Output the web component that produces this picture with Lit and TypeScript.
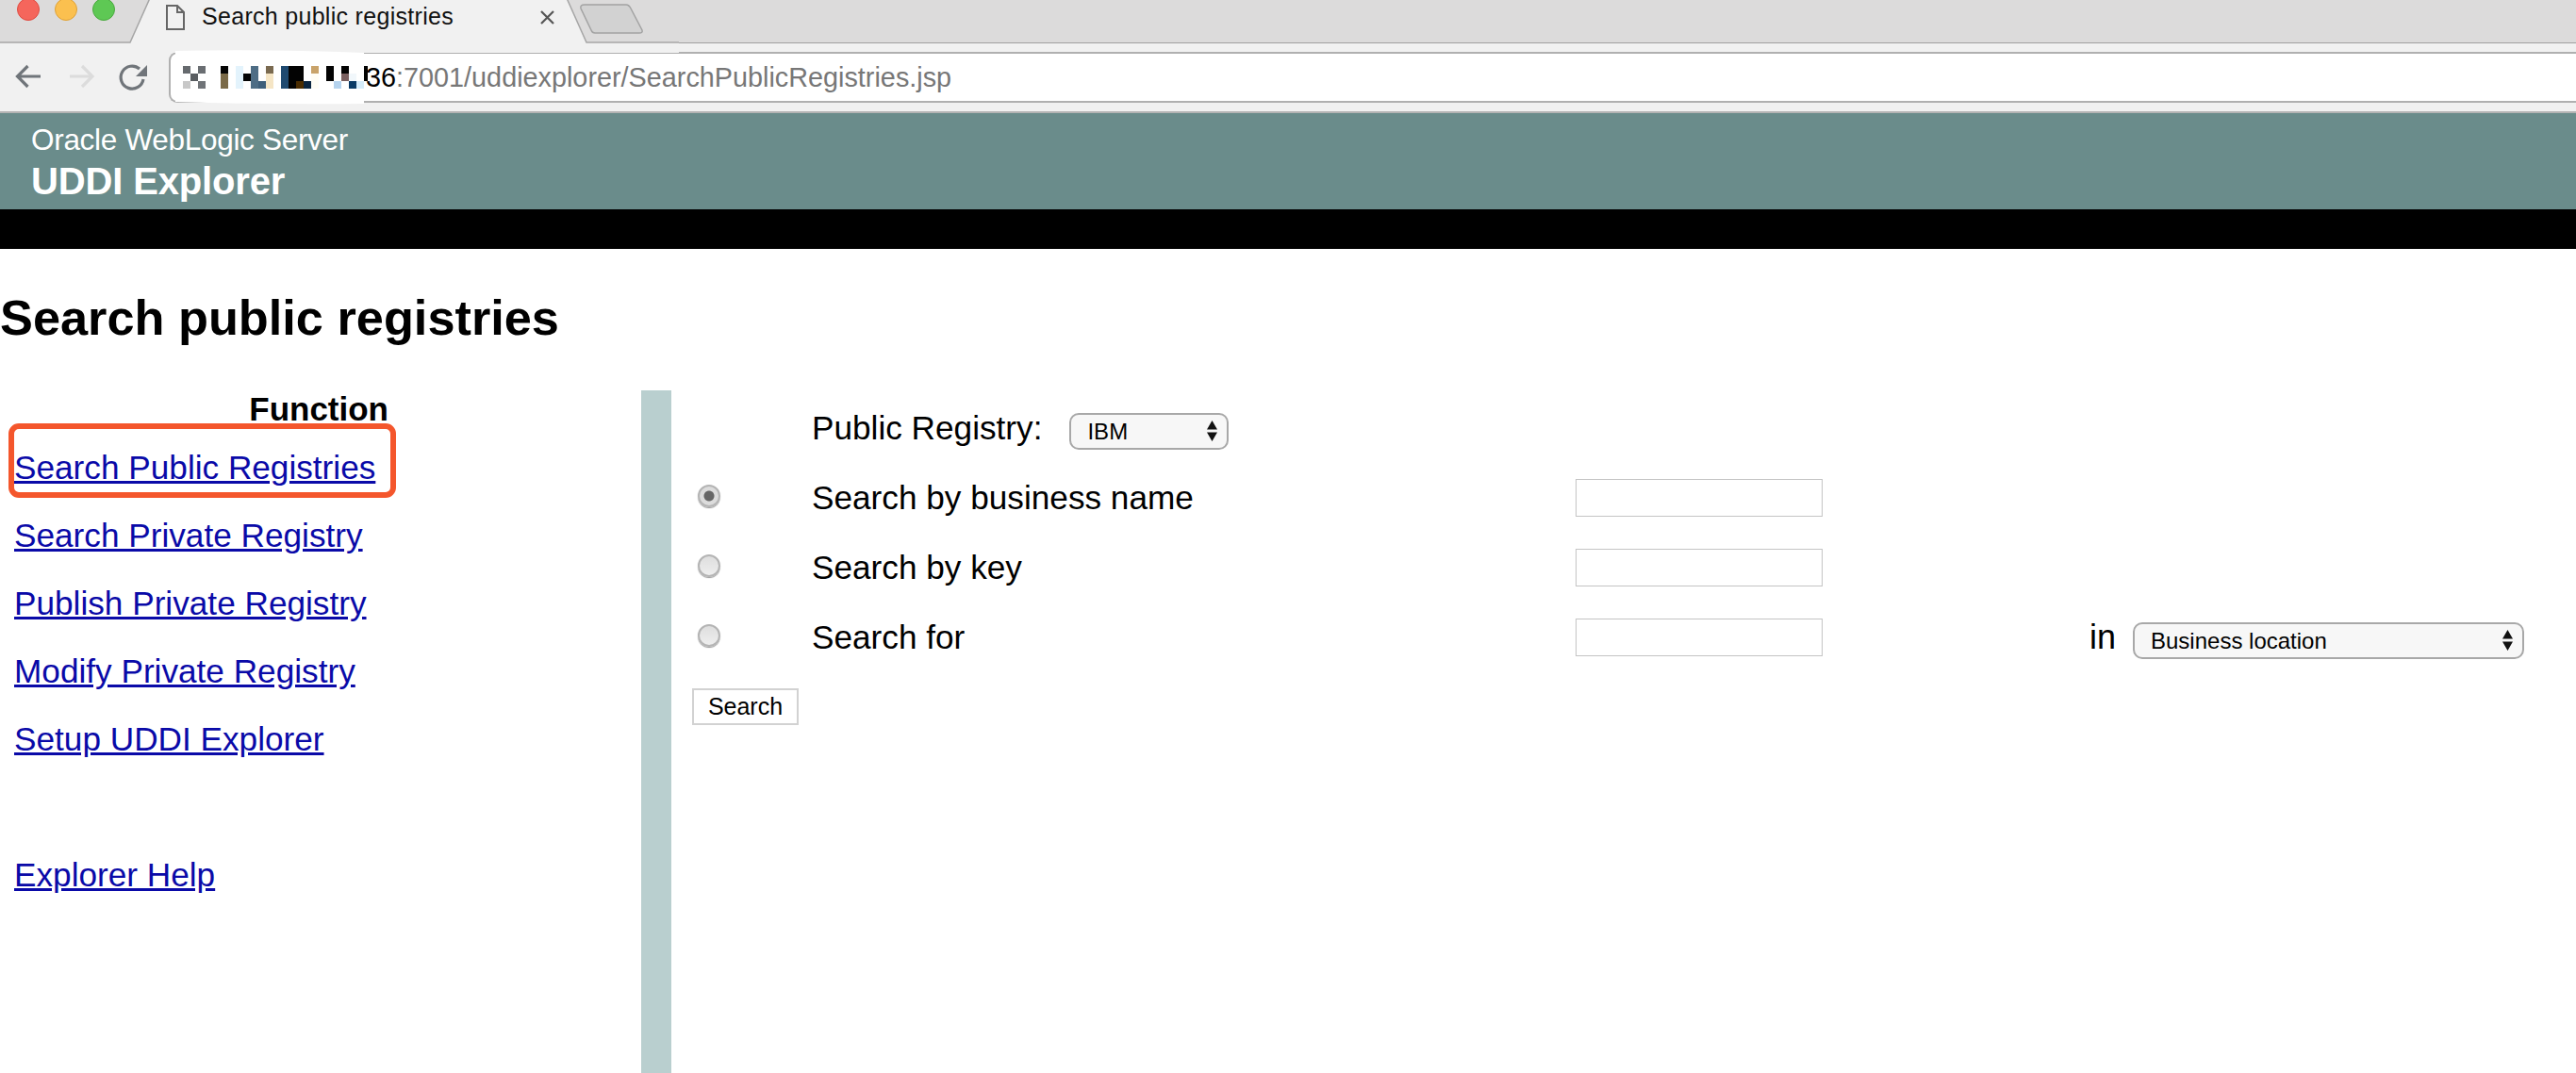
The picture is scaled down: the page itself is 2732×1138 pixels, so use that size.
import { LitElement, html, css, svg } from "lit";
import { customElement } from "lit/decorators.js";

const PIXELS: [number, number, number, number, string][] = [
  [194, 70, 8, 8, "#666a6e"], [210, 70, 8, 8, "#6a6e72"], [202, 78, 8, 8, "#5a5e62"],
  [194, 86, 8, 8, "#c8c8c8"], [210, 86, 8, 8, "#707478"],
  [234, 70, 8, 8, "#050505"], [234, 78, 8, 16, "#7a6a48"],
  [250, 70, 8, 24, "#e3f3fc"], [258, 78, 8, 8, "#050505"],
  [266, 70, 8, 24, "#4e6d85"], [274, 86, 8, 8, "#3f5f7a"],
  [282, 70, 8, 8, "#7a6a50"], [282, 78, 8, 16, "#f5e5c5"],
  [298, 70, 8, 24, "#1f4a70"], [306, 70, 8, 24, "#030303"], [314, 70, 8, 16, "#030303"],
  [314, 86, 8, 8, "#4a2c00"], [322, 86, 8, 8, "#0a2540"],
  [330, 70, 8, 8, "#c9a36a"], [330, 78, 8, 16, "#fffdf5"],
  [346, 70, 8, 16, "#030303"], [354, 86, 8, 8, "#b5d3ee"],
  [362, 70, 8, 8, "#030303"], [362, 78, 8, 8, "#7a6060"],
  [370, 78, 8, 8, "#f1f7fb"], [370, 86, 8, 8, "#0a3a66"], [378, 86, 8, 8, "#d5ecfa"],
  [386, 70, 4, 16, "#030303"],
];

const LINKS = ["Search Public Registries", "Search Private Registry", "Publish Private Registry", "Modify Private Registry", "Setup UDDI Explorer"];

@customElement("browser-chrome")
class BrowserChrome extends LitElement {
  static styles = css`
    :host { display: block; position: relative; height: 120px; background: #f1f1f1; font-family: "Liberation Sans", Arial, sans-serif; overflow: hidden; }
    .strip { height: 45px; background: #dcdbdb; border-bottom: 1px solid #a0a0a0; box-sizing: content-box; }
    .deco { position: absolute; left: 0; top: 0; width: 720px; height: 56px; }
    .title { position: absolute; left: 214px; top: 2px; font-size: 25px; line-height: 30px; color: #111; letter-spacing: 0.3px; white-space: nowrap; }
    .toolbar { display: flex; align-items: stretch; height: 74px; padding: 9px 0 11px 0; box-sizing: border-box; }
    .nav { width: 179px; flex: none; }
    .url { flex: 1; background: #fff; border: 2px solid #b0b0b0; border-right: none; border-radius: 9px 0 0 9px; font-size: 28.8px; line-height: 50px; padding-left: 207px; color: #777; white-space: nowrap; display: flex; box-sizing: border-box; }
    .url b { font-weight: 400; color: #000; }
    .mask { position: absolute; left: 0; top: 0; width: 400px; height: 120px; pointer-events: none; }
    .rule { position: absolute; left: 0; right: 0; bottom: 0; height: 2px; background: #b4b4b4; }
  `;
  render() {
    return html`
      <div class="strip"></div>
      <svg class="deco" viewBox="0 0 720 56">
        <path d="M0 46H720V56H0Z" fill="#f1f1f1"/>
        <path d="M159 -2L138 45H0V47H720V45H622L601 -2Z" fill="#f1f1f1"/>
        <path d="M159 -2L138 45H0" fill="none" stroke="#a6a6a6" stroke-width="1.5"/>
        <path d="M601 -2L622 45H720" fill="none" stroke="#a6a6a6" stroke-width="1.5"/>
        <circle cx="30" cy="10" r="11.5" fill="#f5665c" stroke="#df4c42" stroke-width="1"/>
        <circle cx="70" cy="10" r="11.5" fill="#fbc04f" stroke="#dfa238" stroke-width="1"/>
        <circle cx="110" cy="10" r="11.5" fill="#5ec854" stroke="#4aa93f" stroke-width="1"/>
        <path d="M177 6H188L195 13V31H177Z M188 6V13H195" fill="none" stroke="#666" stroke-width="2"/>
        <path d="M574 12L587 25M587 12L574 25" fill="none" stroke="#555" stroke-width="2.2"/>
        <path d="M620 5H664Q667 5 669 9L681 32Q682 35 678 35H631Q628 35 627 32L616 9Q615 5 620 5Z" fill="#d2d2d2" stroke="#a3a3a3" stroke-width="1.5"/>
      </svg>
      <div class="title">Search public registries</div>
      <div class="toolbar">
        <div class="nav"></div>
        <div class="url"><b>36</b>:7001/uddiexplorer/SearchPublicRegistries.jsp</div>
      </div>
      <div class="rule"></div>
      <svg class="mask" viewBox="0 0 400 120">
        <path d="M43 81H19M29.5 70L18.5 81L29.5 92" fill="none" stroke="#70757a" stroke-width="3.2"/>
        <path d="M74 81H98M87 70L98 81L87 92" fill="none" stroke="#dcdcdc" stroke-width="3.2"/>
        <path d="M152 84A12 12 0 1 1 148 73" fill="none" stroke="#70757a" stroke-width="3.2"/>
        <path d="M156 69V81H144Z" fill="#70757a"/>
        <path d="M186 54Q280 52 386 56V110Q280 111 186 108Z" fill="#fff"/>
        ${PIXELS.map(([x, y, w, h, c]) => svg`<rect x=${x} y=${y} width=${w} height=${h} fill=${c}/>`)}
      </svg>
    `;
  }
}

@customElement("app-root")
export class AppRoot extends LitElement {
  static styles = css`
    :host { display: block; height: 1138px; overflow: hidden; background: #fff; position: relative; font-family: "Liberation Sans", Arial, sans-serif; color: #000; }
    .banner { height: 102px; background: #6a8c8b; color: #fff; padding: 9px 0 0 33px; box-sizing: border-box; }
    .banner div { white-space: nowrap; }
    .product { font-size: 31.5px; line-height: 39px; letter-spacing: -0.3px; }
    .app { font-size: 40px; font-weight: 700; line-height: 48px; letter-spacing: -0.15px; }
    .black { height: 42px; background: #000; }
    h1 { margin: 0; font-size: 52.3px; line-height: 60px; height: 150px; padding-top: 43px; box-sizing: border-box; font-weight: 700; white-space: nowrap; }
    .main { display: grid; grid-template-columns: 680px 32px 1fr; height: 724px; }
    .fn { font-size: 35px; font-weight: 700; line-height: 40px; text-align: right; width: 412px; margin-bottom: 6px; }
    .links { display: flex; flex-direction: column; padding-left: 15px; }
    .links a { display: block; height: 72px; font-size: 35.2px; line-height: 72px; color: #0a0aa8; text-decoration: underline; white-space: nowrap; }
    .links .gap { margin-top: 72px; }
    .bar { background: #b9cfcf; }
    .form { padding: 3px 0 0 28px; display: grid; grid-template-columns: 121px 810px 545px 46px 415px; grid-auto-rows: 74px; align-items: center; font-size: 35.2px; }
    .form span.lbl { white-space: nowrap; }
    .in { font-size: 36px; }
    input[type="radio"] { appearance: none; margin: 0 0 4px; width: 24px; height: 24px; border-radius: 50%; border: 2px solid #b4b4b4; background: linear-gradient(#dedede, #eeeeee); box-shadow: 0 1px 1px #999; box-sizing: border-box; display: block; position: relative; }
    input[type="radio"]:checked { background: radial-gradient(circle, #666 0 5px, #dcdcdc 6px); }
    input[type="text"] { width: 262px; height: 40px; border: 1.5px solid #c4c4c4; box-sizing: border-box; background: #fff; margin: 0; padding: 0; }
    .selwrap { position: relative; display: inline-block; }
    .selwrap svg { position: absolute; right: 12px; top: 50%; margin-top: -11px; width: 11px; height: 22px; pointer-events: none; }
    select { appearance: none; display: block; height: 39px; border: 2px solid #a8a8a8; border-radius: 10px; background: #f7f7f7; font: 24px "Liberation Sans", Arial, sans-serif; color: #000; padding: 0 0 0 17px; margin: 0; box-sizing: border-box; }
    .sel1 { margin-left: 29px; }
    .sel1 select { width: 169px; }
    .reg { display: flex; align-items: center; grid-column: 2 / 4; }
    .reg .selwrap { top: 3px; }
    .loc { top: 3px; }
    .loc select { width: 415px; }
    button { grid-column: 1 / 3; justify-self: start; align-self: start; margin: 17px 0 0 -6px; width: 113px; height: 39px; border: 2px solid #d2d2d2; background: #fff; box-sizing: border-box; font: 25px "Liberation Sans", Arial, sans-serif; color: #000; padding: 0; }
    .hl { position: absolute; left: 9px; top: 449px; width: 411px; height: 79px; border: 6px solid #f4562c; border-radius: 11px; box-sizing: border-box; pointer-events: none; }
  `;

  private arrows() {
    return html`<svg viewBox="0 0 11 22"><path d="M5.5 0L11 9.5H0Z M5.5 22L11 12.5H0Z" fill="#111"/></svg>`;
  }

  render() {
    return html`
      <browser-chrome></browser-chrome>
      <div class="banner">
        <div class="product">Oracle WebLogic Server</div>
        <div class="app">UDDI Explorer</div>
      </div>
      <div class="black"></div>
      <h1>Search public registries</h1>
      <div class="main">
        <div class="side">
          <div class="fn">Function</div>
          <div class="links">
            ${LINKS.map((l) => html`<a href="#">${l}</a>`)}
            <a class="gap" href="#">Explorer Help</a>
          </div>
        </div>
        <div class="bar"></div>
        <div class="form">
          <span></span>
          <div class="reg">
            <span class="lbl">Public Registry:</span>
            <span class="selwrap sel1"><select><option>IBM</option></select>${this.arrows()}</span>
          </div>
          <span></span><span></span>

          <input type="radio" name="m" checked />
          <span class="lbl">Search by business name</span>
          <input type="text" />
          <span></span><span></span>

          <input type="radio" name="m" />
          <span class="lbl">Search by key</span>
          <input type="text" />
          <span></span><span></span>

          <input type="radio" name="m" />
          <span class="lbl">Search for</span>
          <input type="text" />
          <span class="lbl in">in</span>
          <span class="selwrap loc"><select><option>Business location</option></select>${this.arrows()}</span>

          <button>Search</button>
        </div>
      </div>
      <div class="hl"></div>
    `;
  }
}
void BrowserChrome;
